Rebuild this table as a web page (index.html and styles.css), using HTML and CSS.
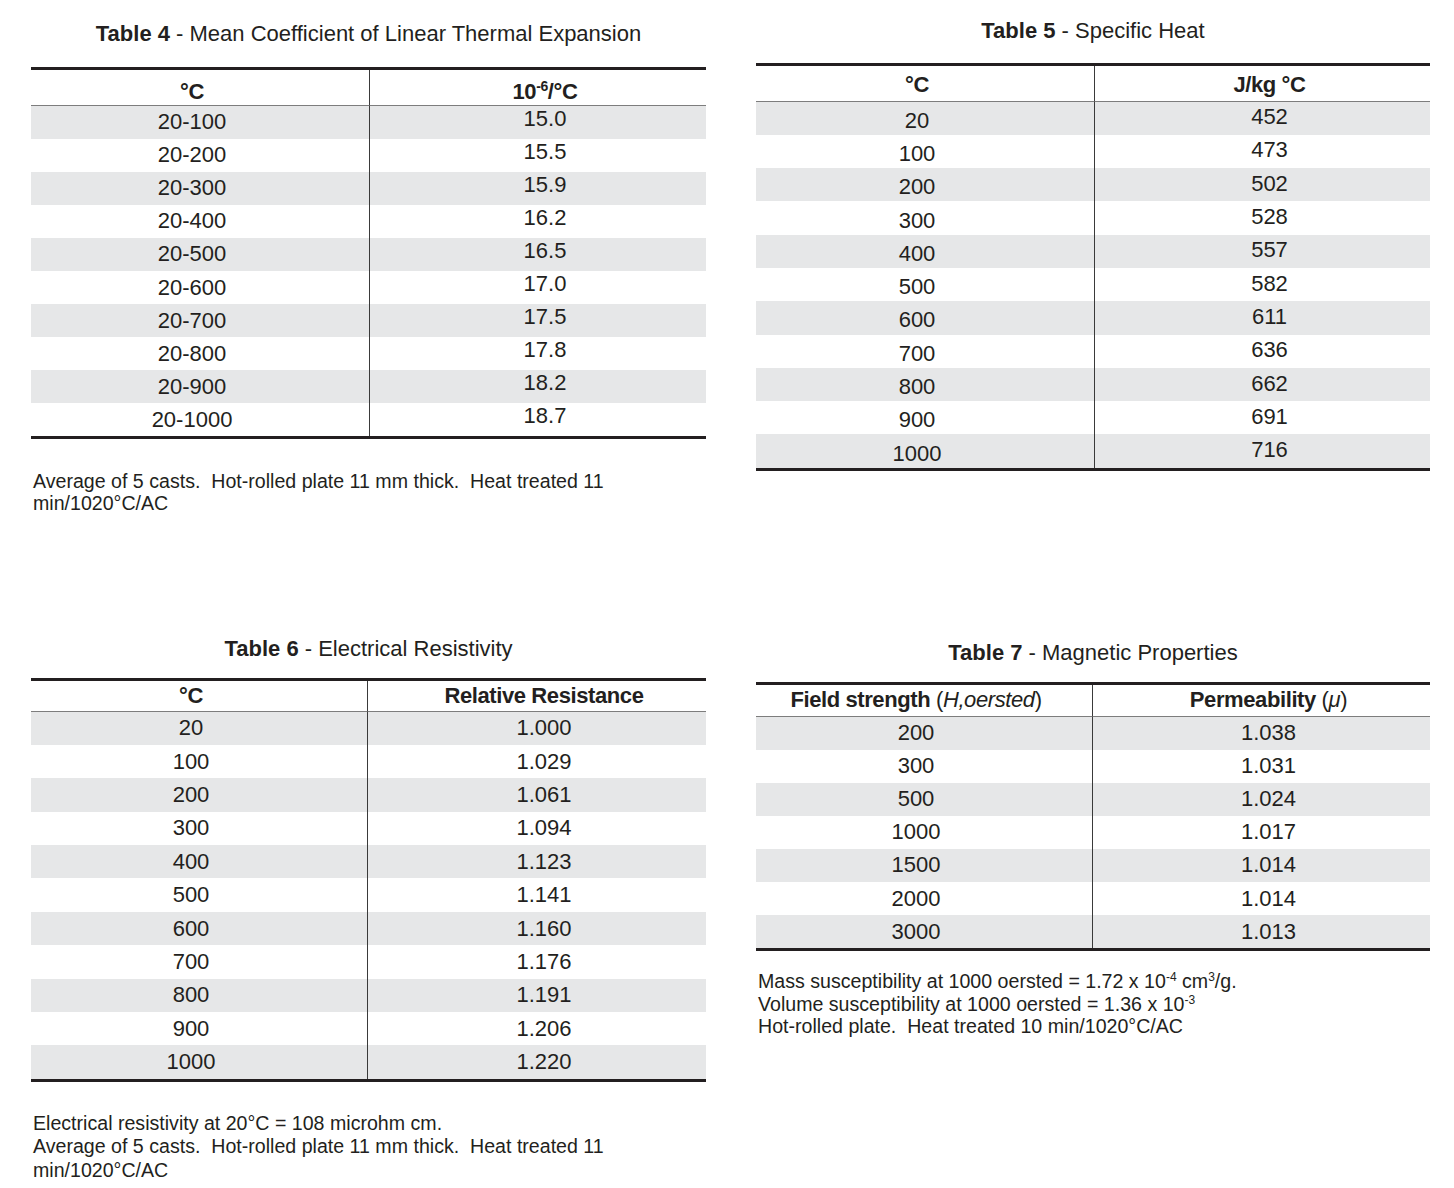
FILE: index.html
```html
<!DOCTYPE html>
<html lang="en">
<head>
<meta charset="utf-8">
<title>Physical Properties Tables</title>
<link rel="stylesheet" href="styles.css">
</head>
<body>
<main class="page">
  <section class="panel p4">
    <h2 class="title"><b>Table 4</b> - Mean Coefficient of Linear Thermal Expansion</h2>
    <table class="data t4">
      <thead><tr><th>°C</th><th>10<sup>-6</sup>/°C</th></tr></thead>
      <tbody>
        <tr><td>20-100</td><td>15.0</td></tr>
        <tr><td>20-200</td><td>15.5</td></tr>
        <tr><td>20-300</td><td>15.9</td></tr>
        <tr><td>20-400</td><td>16.2</td></tr>
        <tr><td>20-500</td><td>16.5</td></tr>
        <tr><td>20-600</td><td>17.0</td></tr>
        <tr><td>20-700</td><td>17.5</td></tr>
        <tr><td>20-800</td><td>17.8</td></tr>
        <tr><td>20-900</td><td>18.2</td></tr>
        <tr><td>20-1000</td><td>18.7</td></tr>
      </tbody>
    </table>
    <div class="notes n4">
      <p>Average of 5 casts.&nbsp; Hot-rolled plate 11 mm thick.&nbsp; Heat treated 11 min/1020°C/AC</p>
    </div>
  </section>

  <section class="panel p5">
    <h2 class="title"><b>Table 5</b> - Specific Heat</h2>
    <table class="data t5">
      <thead><tr><th>°C</th><th>J/kg °C</th></tr></thead>
      <tbody>
        <tr><td>20</td><td>452</td></tr>
        <tr><td>100</td><td>473</td></tr>
        <tr><td>200</td><td>502</td></tr>
        <tr><td>300</td><td>528</td></tr>
        <tr><td>400</td><td>557</td></tr>
        <tr><td>500</td><td>582</td></tr>
        <tr><td>600</td><td>611</td></tr>
        <tr><td>700</td><td>636</td></tr>
        <tr><td>800</td><td>662</td></tr>
        <tr><td>900</td><td>691</td></tr>
        <tr><td>1000</td><td>716</td></tr>
      </tbody>
    </table>
  </section>

  <section class="panel p6">
    <h2 class="title"><b>Table 6</b> - Electrical Resistivity</h2>
    <table class="data t6">
      <thead><tr><th>°C</th><th>Relative Resistance</th></tr></thead>
      <tbody>
        <tr><td>20</td><td>1.000</td></tr>
        <tr><td>100</td><td>1.029</td></tr>
        <tr><td>200</td><td>1.061</td></tr>
        <tr><td>300</td><td>1.094</td></tr>
        <tr><td>400</td><td>1.123</td></tr>
        <tr><td>500</td><td>1.141</td></tr>
        <tr><td>600</td><td>1.160</td></tr>
        <tr><td>700</td><td>1.176</td></tr>
        <tr><td>800</td><td>1.191</td></tr>
        <tr><td>900</td><td>1.206</td></tr>
        <tr><td>1000</td><td>1.220</td></tr>
      </tbody>
    </table>
    <div class="notes n6">
      <p>Electrical resistivity at 20°C = 108 microhm cm.</p>
      <p>Average of 5 casts.&nbsp; Hot-rolled plate 11 mm thick.&nbsp; Heat treated 11 min/1020°C/AC</p>
    </div>
  </section>

  <section class="panel p7">
    <h2 class="title"><b>Table 7</b> - Magnetic Properties</h2>
    <table class="data t7">
      <thead><tr><th>Field strength <span class="reg">(<i>H,oersted</i>)</span></th><th>Permeability <span class="reg">(<i>μ</i>)</span></th></tr></thead>
      <tbody>
        <tr><td>200</td><td>1.038</td></tr>
        <tr><td>300</td><td>1.031</td></tr>
        <tr><td>500</td><td>1.024</td></tr>
        <tr><td>1000</td><td>1.017</td></tr>
        <tr><td>1500</td><td>1.014</td></tr>
        <tr><td>2000</td><td>1.014</td></tr>
        <tr><td>3000</td><td>1.013</td></tr>
      </tbody>
    </table>
    <div class="notes n7">
      <p>Mass susceptibility at 1000 oersted = 1.72 x 10<sup>-4</sup> cm<sup>3</sup>/g.</p>
      <p>Volume susceptibility at 1000 oersted = 1.36 x 10<sup>-3</sup></p>
      <p>Hot-rolled plate.&nbsp; Heat treated 10 min/1020°C/AC</p>
    </div>
  </section>
</main>
</body>
</html>
```
FILE: styles.css
```css
* { box-sizing: border-box; }

html, body {
  margin: 0;
  padding: 0;
  background: #ffffff;
}

body {
  font-family: "Liberation Sans", Arial, Helvetica, sans-serif;
  color: #231f20;
}

.page {
  display: grid;
  grid-template-columns: 675px 674px;
  grid-template-rows: 620px auto;
  column-gap: 50px;
  padding: 0 24px 0 31px;
}

.panel { display: flex; flex-direction: column; }

.p4 { padding-top: 22px; }
.p5 { padding-top: 19px; }
.p6 { padding-top: 17px; }
.p7 { padding-top: 21px; }

.title {
  margin: 0;
  font-size: 22px;
  line-height: 24px;
  font-weight: normal;
  text-align: center;
  color: #231f20;
}
.title b { font-weight: bold; }

.p4 .title { margin-bottom: 21px; }
.p5 .title { margin-bottom: 20px; }
.p6 .title { margin-bottom: 17px; }
.p7 .title { margin-bottom: 17px; }

.data {
  width: 100%;
  border-collapse: separate;
  border-spacing: 0;
  border-top: 3px solid #231f20;
  border-bottom: 3px solid #231f20;
  font-size: 22px;
  table-layout: fixed;
}

.data th,
.data td {
  padding: 0;
  text-align: center;
  vertical-align: middle;
  line-height: 24px;
}

.data th {
  font-weight: bold;
  letter-spacing: -0.4px;
  border-bottom: 1.5px solid #7d7d7d;
}

.data th:first-child,
.data td:first-child {
  border-right: 1px solid #3a3a3a;
  padding-right: 16px;
}

.data th:last-child,
.data td:last-child {
  padding-left: 14px;
}

.data tbody tr:nth-child(odd) td { background: #e6e7e8; }

.data sup {
  font-size: 14px;
  line-height: 0;
  vertical-align: 8px;
}

.t4 th:first-child, .t5 th:first-child { width: 339px; }
.t6 th:first-child, .t7 th:first-child { width: 337px; }

.t4 th { height: 35.5px; padding-top: 10px; }
.t5 th { height: 35.5px; padding-top: 4px; }
.t6 th { height: 30.5px; }
.t7 th { height: 31.5px; }

.t4 td { height: 33.1px; }
.t5 td { height: 33.3px; }
.t6 td { height: 33.4px; }
.t7 td { height: 33.1px; }

.t4 td:last-child { padding-bottom: 7px; }
.t5 td:first-child { padding-top: 5px; }
.t5 td:last-child { padding-bottom: 2px; }

.data .reg { font-weight: normal; }

.notes {
  font-size: 19.6px;
  padding-left: 2px;
  color: #231f20;
}
.notes p { margin: 0; }
.notes sup {
  font-size: 12px;
  line-height: 0;
  vertical-align: 7px;
}

.n4 { margin-top: 31px; line-height: 22px; }
.n6 { margin-top: 30px; line-height: 23.5px; }
.n7 { margin-top: 19px; line-height: 22.5px; }
```
